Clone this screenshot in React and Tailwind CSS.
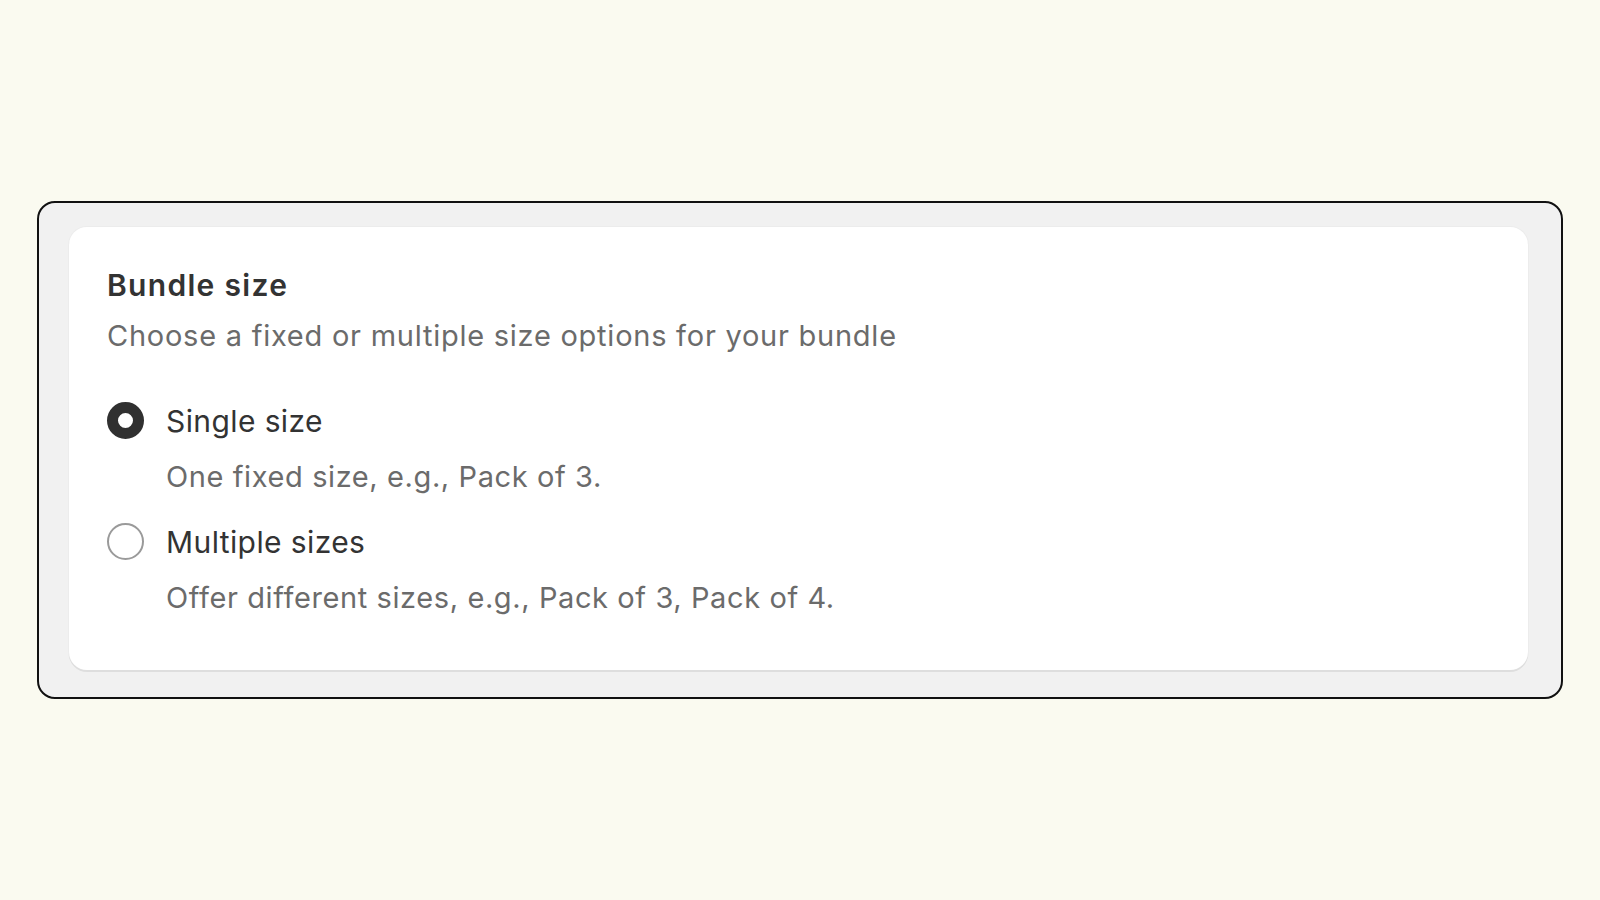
export default function App() {
  const font = { fontFamily: 'Inter, "Noto Sans", sans-serif' };
  return (
    <div className="w-[1600px] h-[900px] bg-[#fafaf0] flex flex-col pt-[201px] px-[37px]" style={font}>
      <div className="w-[1526px] h-[498px] border-2 border-[#111] rounded-[18px] bg-[#f1f1f1] pl-[30px] pr-[33px] pt-[24px] pb-[27px]">
        <div className="h-full bg-white rounded-[18px] shadow-[0_2px_0_#dedede,0_0_0_1px_#ececec] pl-[38px] pt-[40px]">
          <div className="text-[30px] font-semibold text-[#333333] leading-[36px] tracking-[1.3px]">Bundle size</div>
          <div className="mt-[15px] text-[29px] text-[#6b6b6b] leading-[36px] tracking-[0.75px]">
            Choose a fixed or multiple size options for your bundle
          </div>

          <div className="mt-[48px] flex items-center gap-[22px]">
            <span className="w-[37px] h-[37px] rounded-full border-[11px] border-[#303030] bg-white" />
            <span className="text-[30px] text-[#333333] leading-[36px] tracking-[0.4px]">Single size</span>
          </div>
          <div className="ml-[59px] mt-[20px] text-[29px] text-[#6b6b6b] leading-[36px] tracking-[0.6px]">One fixed size, e.g., Pack of 3.</div>

          <div className="mt-[28px] flex items-center gap-[22px]">
            <span className="w-[37px] h-[37px] rounded-full border-[2px] border-[#9a9a9a] bg-white" />
            <span className="text-[30px] text-[#333333] leading-[36px] tracking-[0.4px]">Multiple sizes</span>
          </div>
          <div className="ml-[59px] mt-[20px] text-[29px] text-[#6b6b6b] leading-[36px] tracking-[0.6px]">Offer different sizes, e.g., Pack of 3, Pack of 4.</div>
        </div>
      </div>
    </div>
  );
}
